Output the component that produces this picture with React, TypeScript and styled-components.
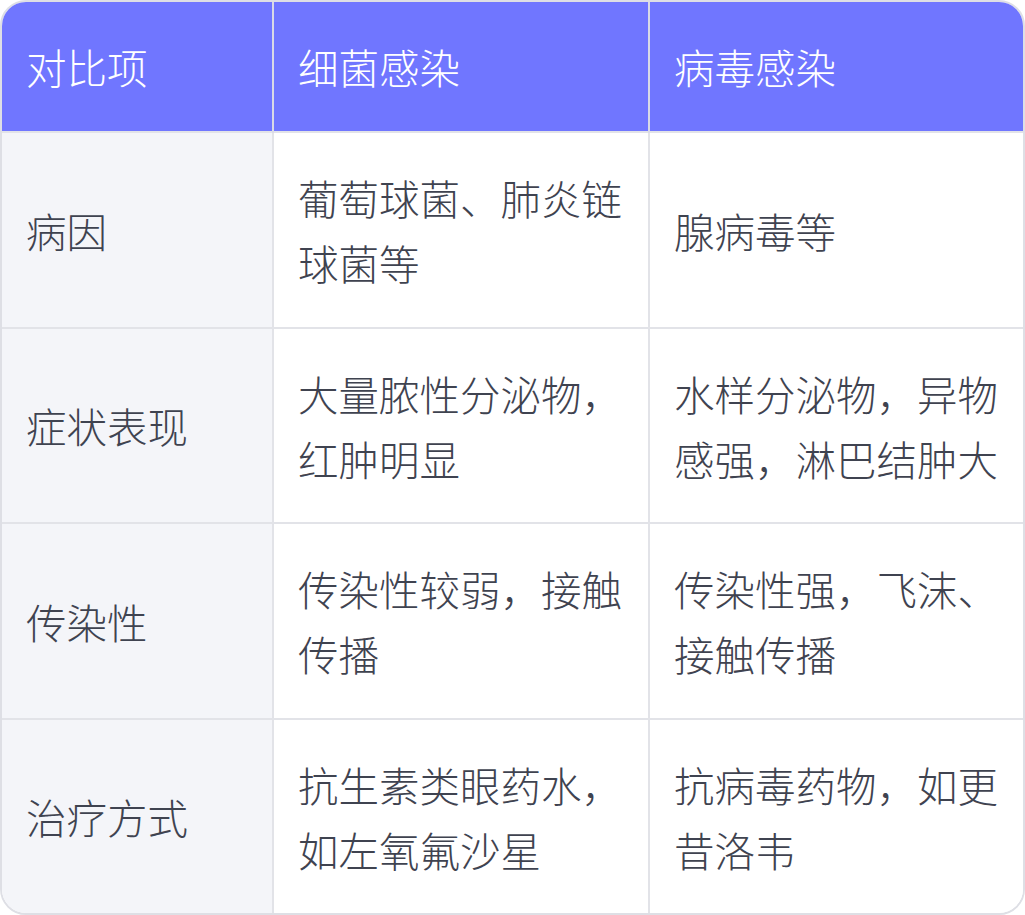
import React from "react";
import styled, { createGlobalStyle } from "styled-components";

const Global = createGlobalStyle`
  html, body { margin: 0; padding: 0; background: #ffffff; }
  body { font-family: "Noto Sans CJK SC", "Noto Sans", sans-serif; }
`;

const Card = styled.div`
  width: 1025px;
  box-sizing: border-box;
  border: 2px solid #dedfe5;
  border-radius: 26px;
  overflow: hidden;
`;

const Table = styled.table`
  width: 100%;
  border-collapse: collapse;
  table-layout: fixed;
  font-size: 40.5px;
  font-weight: 300;
  line-height: 65px;
  color: #3f4350;
`;

const HeadCell = styled.th`
  background: #7076ff;
  color: #ffffff;
  font-weight: 300;
  text-align: left;
  padding: 32px 24px 32px;
  border-left: 2px solid #d9dae6;
  &:first-child { border-left: none; }
`;

const Cell = styled.td<{ $label?: boolean }>`
  background: ${(p) => (p.$label ? "#f4f5f9" : "#ffffff")};
  padding: 32px 24px 31.5px;
  vertical-align: middle;
  border-left: 2px solid #e2e3e8;
  border-top: 2px solid #e2e3e8;
  &:first-child { border-left: none; }
`;

const rows: [string, string, string][] = [
  ["病因", "葡萄球菌、肺炎链球菌等", "腺病毒等"],
  ["症状表现", "大量脓性分泌物，红肿明显", "水样分泌物，异物感强，淋巴结肿大"],
  ["传染性", "传染性较弱，接触传播", "传染性强，飞沫、接触传播"],
  ["治疗方式", "抗生素类眼药水，如左氧氟沙星", "抗病毒药物，如更昔洛韦"],
];

export default function App() {
  return (
    <>
      <Global />
      <Card>
        <Table>
          <colgroup>
            <col style={{ width: 271 }} />
            <col style={{ width: 376 }} />
            <col style={{ width: 374 }} />
          </colgroup>
          <thead>
            <tr>
              <HeadCell>对比项</HeadCell>
              <HeadCell>细菌感染</HeadCell>
              <HeadCell>病毒感染</HeadCell>
            </tr>
          </thead>
          <tbody>
            {rows.map((r) => (
              <tr key={r[0]}>
                <Cell $label>{r[0]}</Cell>
                <Cell>{r[1]}</Cell>
                <Cell>{r[2]}</Cell>
              </tr>
            ))}
          </tbody>
        </Table>
      </Card>
    </>
  );
}
